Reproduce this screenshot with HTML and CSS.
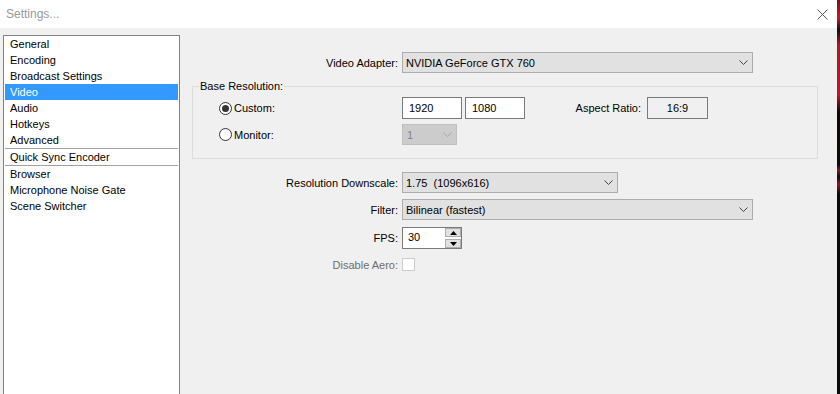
FILE: index.html
```html
<!DOCTYPE html>
<html lang="en">
<head>
    <meta charset="UTF-8">
    <meta name="viewport" content="width=device-width, initial-scale=1.0">
    <title>Settings...</title>
    <link rel="stylesheet" href="styles.css">
</head>
<body>
    <div class="window">
        <div class="titlebar">
            <span class="title">Settings...</span>
            <svg class="close" width="11" height="11" viewBox="0 0 11 11">
                <path d="M0.5 0.5 L10.5 10.5 M10.5 0.5 L0.5 10.5" stroke="#555" stroke-width="1" fill="none"/>
            </svg>
        </div>

        <div class="main">
            <ul class="nav">
                <li>General</li>
                <li>Encoding</li>
                <li>Broadcast Settings</li>
                <li class="active">Video</li>
                <li>Audio</li>
                <li>Hotkeys</li>
                <li>Advanced</li>
                <li class="sep">Quick Sync Encoder</li>
                <li>Browser</li>
                <li>Microphone Noise Gate</li>
                <li>Scene Switcher</li>
            </ul>

            <div class="panel">
                <div class="row">
                    <span class="lbl">Video Adapter:</span>
                    <div class="select wide">
                        <span>NVIDIA GeForce GTX 760</span>
                        <svg class="chev" width="9" height="5" viewBox="0 0 9 5"><polyline points="0.5,0.5 4.5,4.5 8.5,0.5" fill="none" stroke="#444"/></svg>
                    </div>
                </div>

                <fieldset class="group">
                    <legend>Base Resolution:</legend>
                    <div class="grow">
                        <label class="radio"><span class="dot on"></span>Custom:</label>
                        <span class="field">1920</span>
                        <span class="field">1080</span>
                        <span class="aspect-lbl">Aspect Ratio:</span>
                        <span class="aspect">16:9</span>
                    </div>
                    <div class="grow second">
                        <label class="radio"><span class="dot"></span>Monitor:</label>
                        <div class="select disabled">
                            <span>1</span>
                            <svg class="chev" width="9" height="5" viewBox="0 0 9 5"><polyline points="0.5,0.5 4.5,4.5 8.5,0.5" fill="none" stroke="#a8a8a8"/></svg>
                        </div>
                    </div>
                </fieldset>

                <div class="row downscale">
                    <span class="lbl">Resolution Downscale:</span>
                    <div class="select mid">
                        <span>1.75&nbsp; (1096x616)</span>
                        <svg class="chev" width="9" height="5" viewBox="0 0 9 5"><polyline points="0.5,0.5 4.5,4.5 8.5,0.5" fill="none" stroke="#444"/></svg>
                    </div>
                </div>

                <div class="row filter">
                    <span class="lbl">Filter:</span>
                    <div class="select wide">
                        <span>Bilinear (fastest)</span>
                        <svg class="chev" width="9" height="5" viewBox="0 0 9 5"><polyline points="0.5,0.5 4.5,4.5 8.5,0.5" fill="none" stroke="#444"/></svg>
                    </div>
                </div>

                <div class="row fps">
                    <span class="lbl">FPS:</span>
                    <div class="spin">
                        <span class="spin-val">30</span>
                        <div class="spin-btns">
                            <span class="spin-btn"><svg width="7" height="4" viewBox="0 0 7 4"><polygon points="3.5,0 7,4 0,4" fill="#000"/></svg></span>
                            <span class="spin-btn"><svg width="7" height="4" viewBox="0 0 7 4"><polygon points="0,0 7,0 3.5,4" fill="#000"/></svg></span>
                        </div>
                    </div>
                </div>

                <div class="row aero">
                    <span class="lbl muted">Disable Aero:</span>
                    <span class="check"></span>
                </div>
            </div>
        </div>
    </div>
    <div class="edge"></div>
</body>
</html>
```

FILE: styles.css
```css
body {
    margin: 0;
    height: 394px;
    overflow: hidden;
    display: flex;
    font-family: 'Liberation Sans', Arial, sans-serif;
    font-size: 11px;
    color: #000;
    background-color: #0c0c0c;
}

.window {
    width: 837px;
    height: 394px;
    display: flex;
    flex-direction: column;
}

.titlebar {
    height: 28px;
    flex: none;
    display: flex;
    align-items: center;
    justify-content: space-between;
    padding: 0 9px 0 6px;
    background-color: #fff;
}

.title {
    color: #999;
    font-size: 12px;
}

.main {
    flex: 1;
    display: flex;
    min-height: 0;
    background-color: #f0f0f0;
}

.nav {
    flex: none;
    width: 177px;
    box-sizing: border-box;
    margin: 7px 0 0 3px;
    padding: 0 1px;
    list-style: none;
    background-color: #fff;
    border: 1px solid #828282;
    border-bottom: none;
}

.nav li {
    height: 16px;
    line-height: 16px;
    padding-left: 5px;
}

.nav li.active {
    background-color: #3399ff;
    color: #fff;
}

.nav li.sep {
    border-top: 1px solid #a0a0a0;
    border-bottom: 1px solid #a0a0a0;
}

.panel {
    flex: 1;
    padding: 24px 19px 0 12px;
}

.row {
    display: flex;
    align-items: center;
}

.lbl {
    flex: none;
    width: 206px;
    margin-right: 4px;
    text-align: right;
}

.muted {
    color: #6d6d6d;
}

.select {
    height: 21px;
    box-sizing: border-box;
    display: flex;
    align-items: center;
    justify-content: space-between;
    padding: 0 4px 0 3px;
    background-color: #e1e1e1;
    border: 1px solid #adadad;
}

.select.wide {
    width: 351px;
}

.select.mid {
    width: 216px;
}

.select.disabled {
    width: 55px;
    padding-left: 4px;
    color: #838383;
    background-color: #cccccc;
    border-color: #bfbfbf;
}

.group {
    margin: 6px 0 0;
    padding: 4px 0 13px 6px;
    min-width: 0;
    border: 1px solid #dcdcdc;
}

.group legend {
    padding: 0 1px;
    line-height: 14px;
}

.grow {
    display: flex;
    align-items: center;
    height: 22px;
}

.grow.second {
    height: 21px;
    margin-top: 5px;
}

.radio {
    flex: none;
    width: 203px;
    box-sizing: border-box;
    padding-left: 20px;
    display: flex;
    align-items: center;
    gap: 2px;
}

.dot {
    width: 13px;
    height: 13px;
    box-sizing: border-box;
    border: 1px solid #333;
    border-radius: 50%;
    background-color: #fff;
    display: flex;
    align-items: center;
    justify-content: center;
}

.dot.on::after {
    content: "";
    width: 7px;
    height: 7px;
    border-radius: 50%;
    background-color: #333;
}

.field {
    width: 60px;
    height: 22px;
    box-sizing: border-box;
    margin-right: 3px;
    padding-left: 6px;
    line-height: 20px;
    background-color: #fff;
    border: 1px solid #7a7a7a;
}

.aspect-lbl {
    width: 113px;
    text-align: right;
}

.aspect {
    width: 61px;
    height: 22px;
    box-sizing: border-box;
    margin-left: 6px;
    line-height: 20px;
    text-align: center;
    background-color: #f0f0f0;
    border: 1px solid #7a7a7a;
}

.downscale {
    margin-top: 13px;
}

.filter {
    margin-top: 6px;
}

.fps {
    margin-top: 7px;
}

.spin {
    width: 60px;
    height: 22px;
    box-sizing: border-box;
    display: flex;
    background-color: #fff;
    border: 1px solid #7a7a7a;
}

.spin-val {
    flex: 1;
    padding-left: 5px;
    line-height: 19px;
}

.spin-btns {
    width: 16px;
    display: flex;
    flex-direction: column;
    justify-content: space-between;
}

.spin-btn {
    height: 9px;
    box-sizing: border-box;
    display: flex;
    align-items: center;
    justify-content: center;
    background-color: #e1e1e1;
    border: 1px solid #adadad;
}

.aero {
    margin-top: 9px;
}

.check {
    width: 13px;
    height: 13px;
    box-sizing: border-box;
    background-color: #fff;
    border: 1px solid #cccccc;
}

.edge {
    width: 3px;
    height: 394px;
    background: linear-gradient(#7a1016 0px, #c01c26 18px, #1a0a0a 30px, #a81a22 45px, #b51c25 95px, #120606 112px, #0c0c0c 165px, #8a1a20 170px, #0c0c0c 177px, #8a1a20 184px, #0c0c0c 194px, #0c0c0c 100%);
}
```
